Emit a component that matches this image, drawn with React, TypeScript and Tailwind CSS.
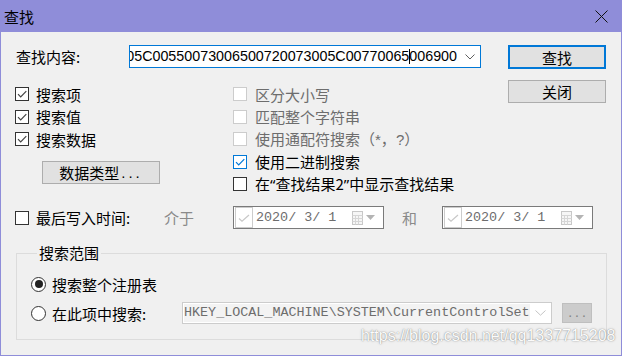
import React from "react";

type Tone = "dark" | "blue" | "off";

function Check({ checked, tone }: { checked?: boolean; tone: Tone }) {
  const border =
    tone === "blue" ? "border-[#0078d7]" : tone === "off" ? "border-[#cccccc]" : "border-[#333333]";
  const stroke = tone === "blue" ? "#0078d7" : "#444444";
  return (
    <span className={`w-[14px] h-[14px] shrink-0 border ${border} bg-white flex items-center justify-center`}>
      {checked && (
        <svg width="12" height="12" viewBox="0 0 12 12">
          <path d="M2 6.2 L4.7 9 L10.3 3.2" fill="none" stroke={stroke} strokeWidth="1.2" />
        </svg>
      )}
    </span>
  );
}

function Radio({ on }: { on?: boolean }) {
  return (
    <span className="w-[15px] h-[15px] shrink-0 rounded-full border border-[#333333] bg-white flex items-center justify-center">
      {on && <span className="w-[8px] h-[8px] rounded-full bg-[#222222]" />}
    </span>
  );
}

function CheckRow({
  label,
  checked,
  tone,
  gap,
}: {
  label: React.ReactNode;
  checked?: boolean;
  tone: Tone;
  gap: string;
}) {
  return (
    <div className={`flex items-center ${gap}`}>
      <Check checked={checked} tone={tone} />
      <span className={`leading-none whitespace-nowrap ${tone === "off" ? "text-[#6d6d6d]" : "text-black"}`}>
        {label}
      </span>
    </div>
  );
}

function DatePicker() {
  return (
    <div className="w-[151px] h-[23px] border border-[#7a7a7a] bg-white flex items-center pl-[1px] pr-[8px]">
      <span className="w-[18px] h-[21px] border border-[#cccccc] flex items-center justify-center">
        <svg width="14" height="12" viewBox="0 0 14 12">
          <path d="M2 6.5 L5 9.3 L12 3" fill="none" stroke="#c8c8c8" strokeWidth="1.2" />
        </svg>
      </span>
      <span className="ml-[3px] font-['Liberation_Mono',monospace] text-[13.4px] text-[#6d6d6d] whitespace-pre leading-none">
        2020/ 3/ 1
      </span>
      <span className="ml-auto flex items-center gap-[3px]">
        <svg width="11" height="14" viewBox="0 0 11 14">
          <rect x="0.5" y="0.5" width="10" height="13" fill="#f6f6f6" stroke="#c8c8c8" />
          <path d="M0.5 4.5 H10.5 M0.5 7.5 H10.5 M0.5 10.5 H10.5 M3.5 4.5 V13.5 M6.5 4.5 V13.5" stroke="#d6d6d6" />
        </svg>
        <svg width="9" height="5" viewBox="0 0 9 5">
          <polygon points="0,0 9,0 4.5,5" fill="#b4b4b4" />
        </svg>
      </span>
    </div>
  );
}

export default function App() {
  const hex = "0043003A005C00550073006500720073005C00770065";
  return (
    <div className="relative w-[622px] h-[356px] bg-[#f0f0f0] border border-t-0 border-[#8f8dd9] flex flex-col font-['Noto_Sans_CJK_SC','Noto_Sans',sans-serif] text-[15px] text-black overflow-hidden">
      {/* title bar */}
      <div className="h-[32px] shrink-0 bg-[#8f8dd9] flex items-center justify-between pl-[3px] pr-[13px]">
        <span className="text-[15px] leading-none">查找</span>
        <svg width="13" height="13" viewBox="0 0 13 13">
          <path d="M0.5 0.5 L12.5 12.5 M12.5 0.5 L0.5 12.5" stroke="#111111" strokeWidth="1" />
        </svg>
      </div>

      {/* body */}
      <div className="flex flex-col pl-[14px] pt-[13px]">
        <div className="flex">
          <div className="w-[466px] flex flex-col">
            <div className="flex items-center h-[23px]">
              <span className="w-[114px] pl-[1px] leading-none whitespace-nowrap">查找内容:</span>
              <div className="w-[352px] h-[23px] border border-[#0078d7] bg-white flex items-center">
                <div className="flex-1 min-w-0 overflow-hidden flex justify-end items-center">
                  <span className="whitespace-nowrap font-['Liberation_Sans',Arial,sans-serif] text-[14.3px] leading-none flex items-center">
                    {hex}
                    <span className="inline-block w-[1px] h-[15px] bg-black -mr-[1px]" />
                    006900
                  </span>
                </div>
                <span className="w-[23px] shrink-0 flex items-center justify-center pl-[3px]">
                  <svg width="10" height="6" viewBox="0 0 10 6">
                    <path d="M0.5 0.5 L5 5 L9.5 0.5" fill="none" stroke="#606060" strokeWidth="1" />
                  </svg>
                </span>
              </div>
            </div>

            <div className="mt-[14.75px] grid grid-cols-[218px_1fr] grid-rows-[repeat(5,22.5px)]">
              <div className="col-start-1 row-start-1 flex items-center">
                <CheckRow label="搜索项" checked tone="dark" gap="gap-[7px]" />
              </div>
              <div className="col-start-1 row-start-2 flex items-center">
                <CheckRow label="搜索值" checked tone="dark" gap="gap-[7px]" />
              </div>
              <div className="col-start-1 row-start-3 flex items-center">
                <CheckRow label="搜索数据" checked tone="dark" gap="gap-[7px]" />
              </div>
              <div className="col-start-1 row-start-4 row-span-2 flex items-center">
                <button className="ml-[27px] w-[118px] h-[23px] border border-[#adadad] bg-[#e1e1e1] flex items-center justify-center leading-none">
                  数据类型<span className="font-['Liberation_Sans',sans-serif] tracking-[3px] ml-[2px]">...</span>
                </button>
              </div>
              <div className="col-start-2 row-start-1 flex items-center">
                <CheckRow label="区分大小写" tone="off" gap="gap-[8px]" />
              </div>
              <div className="col-start-2 row-start-2 flex items-center">
                <CheckRow label="匹配整个字符串" tone="off" gap="gap-[8px]" />
              </div>
              <div className="col-start-2 row-start-3 flex items-center">
                <CheckRow
                  label={
                    <>
                      使用通配符搜索（<span className="font-['Liberation_Sans',sans-serif]">*</span>，
                      <span className="font-['Liberation_Sans',sans-serif]">?</span>）
                    </>
                  }
                  tone="off"
                  gap="gap-[8px]"
                />
              </div>
              <div className="col-start-2 row-start-4 flex items-center">
                <CheckRow label="使用二进制搜索" checked tone="blue" gap="gap-[8px]" />
              </div>
              <div className="col-start-2 row-start-5 flex items-center">
                <CheckRow
                  label={
                    <>
                      在<span className="font-['Noto_Sans',sans-serif]">“</span>查找结果2
                      <span className="font-['Noto_Sans',sans-serif]">”</span>中显示查找结果
                    </>
                  }
                  tone="dark"
                  gap="gap-[8px]"
                />
              </div>
            </div>
          </div>

          <div className="ml-[27px] flex flex-col">
            <button className="w-[98px] h-[24px] border-2 border-[#0078d7] bg-[#e1e1e1] flex items-center justify-center leading-none">
              查找
            </button>
            <button className="mt-[11px] w-[98px] h-[23px] border border-[#adadad] bg-[#e1e1e1] flex items-center justify-center leading-none">
              关闭
            </button>
          </div>
        </div>

        {/* last write time row */}
        <div className="mt-[10.75px] h-[23px] flex items-center">
          <Check tone="dark" />
          <span className="ml-[7px] w-[128px] leading-none whitespace-nowrap">最后写入时间:</span>
          <span className="w-[69px] leading-none text-[#8a8a8a]">介于</span>
          <DatePicker />
          <span className="ml-[18px] w-[15px] leading-none text-[#8a8a8a]">和</span>
          <span className="ml-[25px]">
            <DatePicker />
          </span>
        </div>

        {/* search range group */}
        <fieldset className="mt-[16px] ml-[1px] w-[591px] border border-[#dcdcdc] pl-[14px] pb-[15px]">
          <legend className="ml-[6px] px-[2px] leading-[16px]">搜索范围</legend>
          <div className="mt-[12px] h-[22px] flex items-center">
            <Radio on />
            <span className="ml-[6px] leading-none">搜索整个注册表</span>
          </div>
          <div className="mt-[7px] h-[22px] flex items-center">
            <Radio />
            <span className="ml-[6px] w-[130px] leading-none whitespace-nowrap">在此项中搜索:</span>
            <div className="w-[370px] h-[22px] border border-[#cccccc] bg-white flex items-center">
              <span className="ml-[1px] h-[18px] flex items-center bg-[#f3f3f3] font-['Liberation_Mono',monospace] text-[13.4px] text-[#6d6d6d] leading-none whitespace-pre">
                HKEY_LOCAL_MACHINE\SYSTEM\CurrentControlSet
              </span>
              <span className="ml-auto mr-[5px]">
                <svg width="11" height="6" viewBox="0 0 11 6">
                  <path d="M0.5 0.5 L5.5 5.2 L10.5 0.5" fill="none" stroke="#c4c4c4" strokeWidth="1" />
                </svg>
              </span>
            </div>
            <div className="ml-[10px] w-[30px] h-[20px] border border-[#bfbfbf] bg-[#cccccc] flex items-center justify-center">
              <span className="font-['Liberation_Sans',sans-serif] text-[14px] leading-none tracking-[3px] text-[#838383] pl-[3px] -mt-[2px]">
                ...
              </span>
            </div>
          </div>
        </fieldset>
      </div>

      {/* watermark */}
      <div className="absolute left-[360px] top-[328px] font-['Liberation_Sans',Arial,sans-serif] text-[16px] leading-none text-[#fbfbfb] [text-shadow:0_0_1px_rgba(0,0,0,0.45),0_0_3px_rgba(0,0,0,0.2)] whitespace-nowrap pointer-events-none">
        https://blog.csdn.net/qq1337715208
      </div>
    </div>
  );
}
